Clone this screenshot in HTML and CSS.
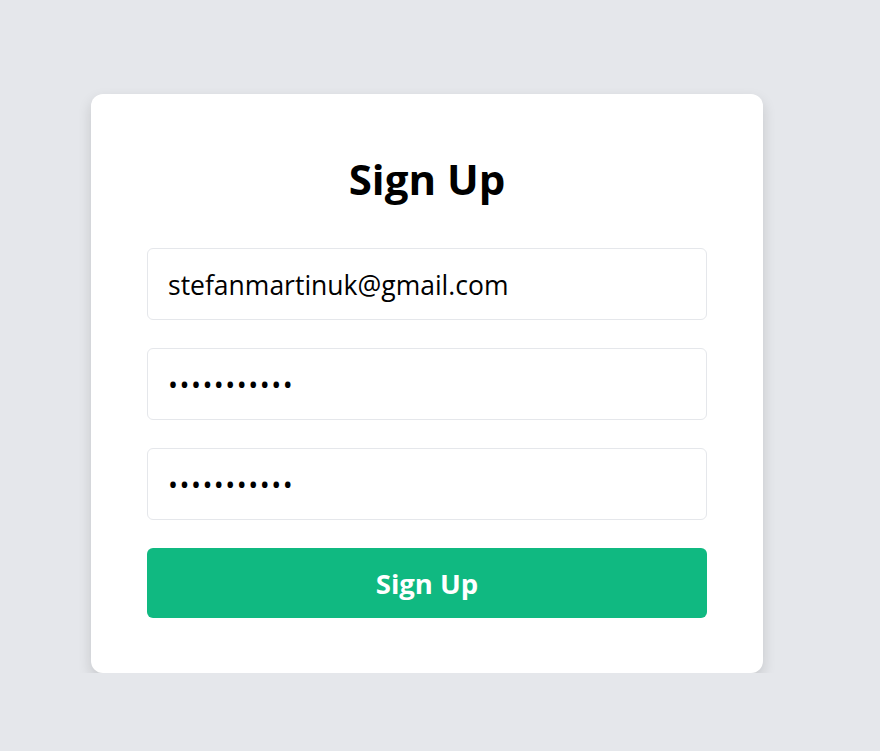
FILE: index.html
```html
<!DOCTYPE html>
<html>
<head>
<meta charset="utf-8">
<link rel="stylesheet" href="styles.css">
</head>
<body>
<div class="page">
  <form class="card">
    <h1 class="title">Sign Up</h1>
    <input class="field" type="email" value="stefanmartinuk@gmail.com">
    <input class="field field-secret" type="password" value="12345678901">
    <input class="field field-secret" type="password" value="12345678901">
    <button class="btn" type="button">Sign Up</button>
  </form>
</div>
</body>
</html>
```
FILE: styles.css
```css
html, body {
  margin: 0;
  padding: 0;
  background: #e5e7eb;
  font-family: "Open Sans", "Noto Sans", sans-serif;
}
.page {
  padding: 94px 0 0 91px;
}
.card {
  box-sizing: border-box;
  width: 672px;
  background: #fff;
  border-radius: 12px;
  padding: 56px 56px 55px;
  box-shadow: 0 6px 14px rgba(0, 0, 0, 0.14);
  display: flex;
  flex-direction: column;
  gap: 28px;
}
.title {
  margin: 4px 0 16px;
  font-size: 42px;
  line-height: 50px;
  font-weight: 700;
  text-align: center;
  color: #000;
}
.field {
  box-sizing: border-box;
  height: 72px;
  width: 100%;
  border: 1px solid #e5e7eb;
  border-radius: 6px;
  padding: 1px 20px 0;
  font-family: inherit;
  font-size: 26.5px;
  color: #000;
  background: #fff;
  outline: none;
}
.field-secret {
  letter-spacing: 1.5px;
}
.btn {
  height: 70px;
  border: none;
  border-radius: 6px;
  background: #10b981;
  color: #fff;
  font-family: inherit;
  font-size: 27.5px;
  font-weight: 700;
  cursor: pointer;
}
```
